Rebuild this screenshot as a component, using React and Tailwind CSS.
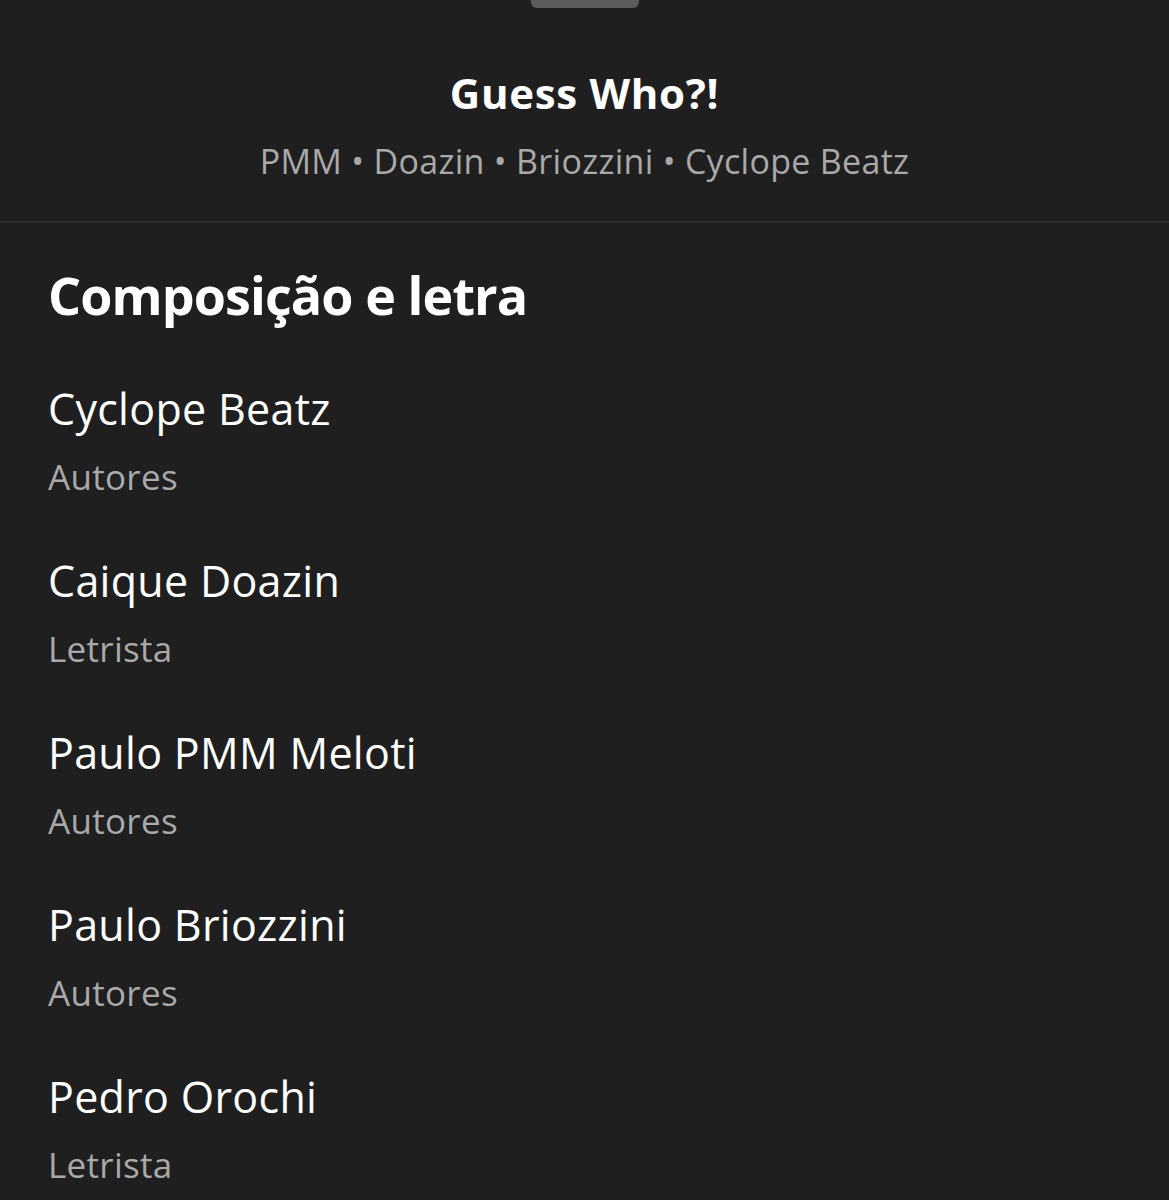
export default function App() {
  const items = [
    ["Cyclope Beatz", "Autores"],
    ["Caique Doazin", "Letrista"],
    ["Paulo PMM Meloti", "Autores"],
    ["Paulo Briozzini", "Autores"],
    ["Pedro Orochi", "Letrista"],
  ];
  return (
    <div className="w-[1169px] h-[1200px] bg-[#1f1f1f] overflow-hidden" style={{ fontFamily: "'Open Sans', 'Noto Sans', sans-serif" }}>
      <div className="flex justify-center">
        <div className="w-[108px] h-[8px] bg-[#5c5c5c] rounded-b-[6px]" />
      </div>
      <div className="flex flex-col items-center pt-[61px] h-[215px] border-b-2 border-[#2f2f2f]">
        <div className="text-[42px] leading-[48px] font-bold text-white tracking-[0.7px]">Guess Who?!</div>
        <div className="text-[34px] leading-[40px] text-[#a9a9a9] mt-[24px] tracking-[0.3px]">PMM • Doazin • Briozzini • Cyclope Beatz</div>
      </div>
      <div className="px-[48px] pt-[40px]">
        <div className="text-[52px] leading-[64px] font-bold text-white tracking-[-0.9px]">Composição e letra</div>
        <div className="flex flex-col mt-[56px] gap-[58px]">
          {items.map(([n, r]) => (
            <div key={n} className="flex flex-col">
              <div className="text-[43px] leading-[52px] text-white tracking-[0.3px]">{n}</div>
              <div className="text-[35px] leading-[40px] text-[#a9a9a9] mt-[22px] tracking-[0.3px]">{r}</div>
            </div>
          ))}
        </div>
      </div>
    </div>
  );
}
